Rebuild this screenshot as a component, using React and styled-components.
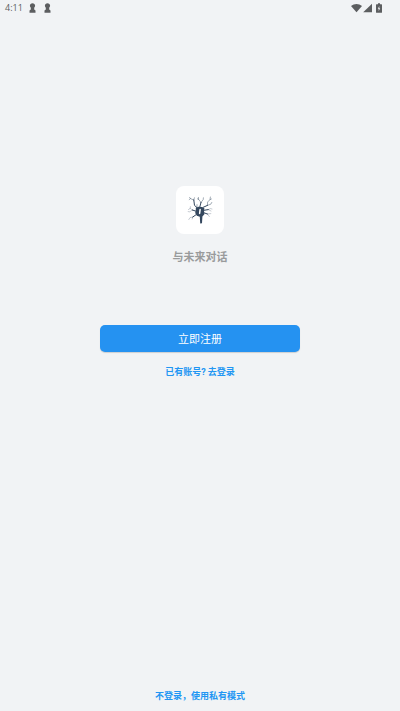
import React from "react";
import styled, { createGlobalStyle } from "styled-components";

const GlobalStyle = createGlobalStyle`
  * { box-sizing: border-box; }
  body {
    margin: 0;
    background: #f1f3f5;
    font-family: "Roboto", "Noto Sans CJK SC", sans-serif;
  }
`;

const Screen = styled.div`
  min-height: 100vh;
  display: flex;
  flex-direction: column;
  background: #f1f3f5;
`;

const StatusBar = styled.header`
  display: flex;
  align-items: center;
  justify-content: space-between;
  height: 16px;
  padding: 0 18px 0 5px;
  color: #5c5e60;
`;

const StatusGroup = styled.div`
  display: flex;
  align-items: center;
  gap: ${({ $gap }) => $gap}px;
`;

const Clock = styled.time`
  font-family: "Open Sans", sans-serif;
  font-size: 9px;
  line-height: 16px;
`;

const StatusIcon = styled.svg`
  display: block;
  height: 10px;
  fill: currentColor;
`;

const Main = styled.main`
  flex: 1;
  display: flex;
  flex-direction: column;
  align-items: center;
  justify-content: center;
  padding: 0 16px 140px;
`;

const LogoTile = styled.div`
  display: grid;
  place-items: center;
  width: 48px;
  height: 48px;
  border-radius: 8px;
  background: #ffffff;
`;

const Slogan = styled.h1`
  margin: 15px 0 59px;
  font-size: 11px;
  line-height: 17px;
  font-weight: 700;
  color: #999b9c;
`;

const PrimaryButton = styled.button`
  width: 50vw;
  padding: 2px 0 0;
  border: 0;
  border-radius: 5px;
  background: #2592f1;
  box-shadow: 0 1px 1px rgba(0, 0, 0, 0.15);
  color: #ffffff;
  font-family: inherit;
  font-size: 11px;
  line-height: 25px;
  cursor: pointer;
`;

const TextLink = styled.a`
  font-size: 9px;
  line-height: 14px;
  font-weight: 700;
  color: #2196f3;
  text-decoration: none;
`;

const LoginRow = styled.div`
  display: flex;
  margin-top: 13px;
`;

const Footer = styled.footer`
  display: flex;
  justify-content: center;
  padding-bottom: 8px;
`;

const Keyhole = () => (
  <StatusIcon width="7" viewBox="0 0 7 10" aria-hidden="true">
    <path d="M3.5 0.2C5 0.2 6.1 1.2 6.1 2.6 6.1 3.6 5.6 4.2 5.2 4.7V6.6L6.5 7.6V9.8H0.5V7.6L1.8 6.6V4.7C1.4 4.2 0.9 3.6 0.9 2.6 0.9 1.2 2 0.2 3.5 0.2Z" />
  </StatusIcon>
);

const Wifi = () => (
  <StatusIcon width="11" viewBox="0 0 11 10" aria-hidden="true">
    <path d="M5.5 9.3 0 3C3.2 0.2 7.8 0.2 11 3Z" />
  </StatusIcon>
);

const Signal = () => (
  <StatusIcon width="9" viewBox="0 0 9 10" aria-hidden="true">
    <path d="M9 0.7V9.3H0.2Z" />
  </StatusIcon>
);

const Battery = () => (
  <StatusIcon width="6" viewBox="0 0 6 10" aria-hidden="true">
    <path
      fillRule="evenodd"
      d="M2 0.2H4V1.2H5.4Q6 1.2 6 1.8V9.2Q6 9.8 5.4 9.8H0.6Q0 9.8 0 9.2V1.8Q0 1.2 0.6 1.2H2ZM3.3 3 1.8 5.8H2.7V8L4.2 5.2H3.3Z"
    />
  </StatusIcon>
);

const NeuronLogo = () => (
  <svg width="26" height="30" viewBox="0 0 26 30" role="img" aria-label="Logo">
    <g fill="none" stroke="#34475e" strokeLinecap="round" strokeLinejoin="round">
      <path strokeWidth="1" d="M10 12.6 7.5 10.4 6.8 5M12.8 12 14 7.4M16 12.4 20.4 10.4M17 15.3 21.2 14.6M17 17.8 20.4 19M9.2 19.6 5.8 22M9 16.2 5.4 15" />
      <path strokeWidth="0.6" opacity="0.75" d="M6.8 5 3.4 3.6 2.6 2.4M6.8 5 7.4 2.8M3.4 3.6 2.2 4.6M14 7.4 11.6 4.4 11.4 2.4M11.6 4.4 10.4 3.8M14 7.4 16.2 4.6 16.4 2.8M20.4 10.4 20.6 7 23 4.6 23.4 2M23 4.6 24.4 4M20.4 10.4 23.8 9.2 24.8 7.4M10 12.6 10 9.6" />
      <path strokeWidth="0.5" opacity="0.55" d="M21.2 14.6 23.4 13.6 25 14M21.2 14.6 24 16M20.4 19 23.8 18.6M20.4 19 22.4 21.6M5.8 22 3 22.6 1.8 24.6M5.8 22 5.2 24M5.4 15 3.2 13.4 1.4 14.6M5.4 15 2.8 16.8 1.2 16.6M3.2 13.4 3.4 11.6" />
    </g>
    <path fill="#34475e" d="M8.8 12.8 11.6 11.8 15 11.9 17.4 13.2 17 16 17.4 19.2 15.4 21.4 15 28.2 13.2 28.4 12.8 21.8 9.8 20.8 8.2 18 8.8 15.2Z" />
    <path fill="none" stroke="#fff" strokeWidth="1.5" strokeLinecap="round" d="M13.1 14.6 12.6 18.4" />
  </svg>
);

export default function App() {
  return (
    <>
      <GlobalStyle />
      <Screen>
        <StatusBar>
          <StatusGroup $gap={6}>
            <Clock>4:11</Clock>
            <StatusGroup $gap={8}>
              <Keyhole />
              <Keyhole />
            </StatusGroup>
          </StatusGroup>
          <StatusGroup $gap={1}>
            <Wifi />
            <StatusGroup $gap={4}>
              <Signal />
              <Battery />
            </StatusGroup>
          </StatusGroup>
        </StatusBar>
        <Main>
          <LogoTile>
            <NeuronLogo />
          </LogoTile>
          <Slogan>与未来对话</Slogan>
          <PrimaryButton type="button">立即注册</PrimaryButton>
          <LoginRow>
            <TextLink href="#login">已有账号? 去登录</TextLink>
          </LoginRow>
        </Main>
        <Footer>
          <TextLink href="#private">不登录，使用私有模式</TextLink>
        </Footer>
      </Screen>
    </>
  );
}
